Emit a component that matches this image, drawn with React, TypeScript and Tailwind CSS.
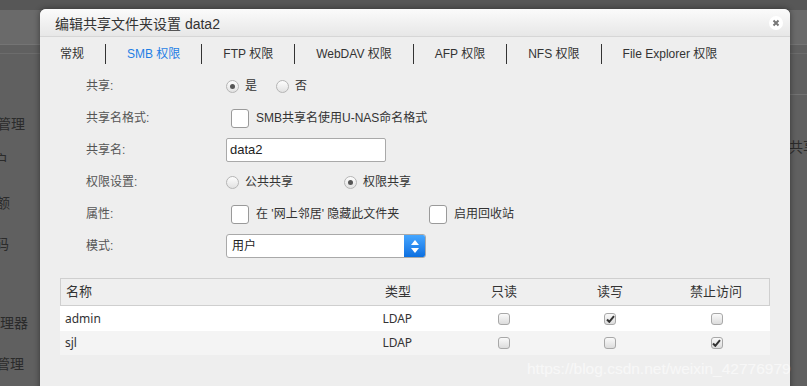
import React from 'react';

const font = "font-['Liberation_Sans','Noto_Sans_CJK_SC',sans-serif]";

function Radio({ checked }: { checked?: boolean }) {
  return (
    <span className="flex h-[13px] w-[13px] items-center justify-center rounded-full border border-[#b5b5b5] bg-gradient-to-b from-[#fdfdfd] to-[#e2e2e2]">
      {checked && <span className="h-[5px] w-[5px] rounded-full bg-[#555]" />}
    </span>
  );
}

function Box() {
  return <span className="ml-[5px] h-[19px] w-[18px] rounded-[3px] border border-[#9a9a9a] bg-white" />;
}

function SmallCheck({ checked }: { checked?: boolean }) {
  return (
    <span className="flex h-[12px] w-[12px] items-center justify-center rounded-[3px] border border-[#a8a8a8] bg-gradient-to-b from-[#fafafa] to-[#dcdcdc]">
      {checked && (
        <svg width="9" height="8" viewBox="0 0 9 8">
          <path d="M1 4.5 L3.3 6.8 L8 1.2" fill="none" stroke="#333" strokeWidth="2" />
        </svg>
      )}
    </span>
  );
}

function Row({ label, children }: { label: string; children: React.ReactNode }) {
  return (
    <div className="flex h-[32px] items-center">
      <div className="w-[140px] text-[12px] text-[#555]">{label}</div>
      <div className="flex items-center text-[12px] text-[#333]">{children}</div>
    </div>
  );
}

const tabs = ['常规', 'SMB 权限', 'FTP 权限', 'WebDAV 权限', 'AFP 权限', 'NFS 权限', 'File Explorer 权限'];

const users = [
  { name: 'admin', type: 'LDAP', perm: 1 },
  { name: 'sjl', type: 'LDAP', perm: 2 },
];

export default function App() {
  return (
    <div className={`relative h-[386px] w-[807px] overflow-hidden bg-[#606060] ${font}`}>
      {/* dimmed page behind the dialog */}
      <div className="h-[10px] bg-[#575757]" />
      <div className="h-[35px] bg-[#6a6a6a] border-b border-[#747474]" />
      <div className="h-[9px] border-b border-[#6c6c6c]" />
      <div className="flex">
        <div className="w-[40px] overflow-hidden text-[14px] leading-[20px] text-[#2b2b2b] whitespace-nowrap">
          <div className="mt-[60px] ml-[-31px]">共享管理</div>
          <div className="mt-[16px] ml-[-20px]">用户</div>
          <div className="mt-[23px] ml-[-18px]">配额</div>
          <div className="mt-[21px] ml-[-47px]">修改密码</div>
          <div className="mt-[59px] ml-[-42px]">文件管理器</div>
          <div className="mt-[21px] ml-[-32px]">系统管理</div>
        </div>
        <div className="flex-1">
          <div className="mt-[40px] border-t border-[#727272]" />
          <div className="mt-[42px] flex justify-end text-[14px] text-[#2b2b2b] whitespace-nowrap">
            <span className="mr-[-10px]">共享</span>
          </div>
        </div>
      </div>

      {/* dialog */}
      <div className="absolute left-[40px] top-[9px] h-[400px] w-[750px] rounded-t-[6px] bg-[#eeeeee] shadow-[0_0_6px_rgba(0,0,0,0.45)]">
        <div className="flex h-[28px] items-center justify-between rounded-t-[6px] border-b border-[#d6d6d6] bg-gradient-to-b from-[#fbfbfb] to-[#e7e7e7] pl-[15px] pr-[7px]">
          <span className="pt-[4px] text-[14px] text-[#333]">编辑共享文件夹设置 data2</span>
          <span className="mt-[1px] flex h-[14px] w-[14px] items-center justify-center rounded-full bg-white">
            <svg width="8" height="8" viewBox="0 0 8 8">
              <path d="M1.5 1.5 L6.5 6.5 M6.5 1.5 L1.5 6.5" stroke="#777" strokeWidth="2" />
            </svg>
          </span>
        </div>

        <div className="mt-[2px] flex h-[30px] items-center pl-[20px] text-[12px] text-[#333]">
          {tabs.map((t, i) => (
            <React.Fragment key={t}>
              {i > 0 && <span className="mx-[21px] h-[20px] w-px bg-[#333]" />}
              <span className={i === 1 ? 'text-[#1f7fe5]' : ''}>{t}</span>
            </React.Fragment>
          ))}
        </div>

        <div className="pt-[1px] pl-[46px]">
          <Row label="共享:">
            <span className="flex w-[50px] items-center gap-[6px]"><Radio checked />是</span>
            <span className="flex items-center gap-[6px]"><Radio />否</span>
          </Row>
          <Row label="共享名格式:">
            <Box />
            <span className="ml-[7px]">SMB共享名使用U-NAS命名格式</span>
          </Row>
          <Row label="共享名:">
            <div className="flex h-[24px] w-[160px] items-center rounded-[2px] border border-[#a9a9a9] bg-white px-[3px] text-[13px] text-[#222]">data2</div>
          </Row>
          <Row label="权限设置:">
            <span className="flex w-[118px] items-center gap-[6px]"><Radio />公共共享</span>
            <span className="flex items-center gap-[6px]"><Radio checked />权限共享</span>
          </Row>
          <Row label="属性:">
            <Box />
            <span className="ml-[7px] w-[168px]">在 '网上邻居' 隐藏此文件夹</span>
            <Box />
            <span className="ml-[7px]">启用回收站</span>
          </Row>
          <Row label="模式:">
            <div className="flex h-[24px] w-[200px] overflow-hidden rounded-[3px] border border-[#a9a9a9] bg-white">
              <span className="flex flex-1 items-center px-[5px] text-[12px] text-[#222]">用户</span>
              <span className="flex w-[21px] flex-col items-center justify-center gap-[3px] bg-gradient-to-b from-[#45a6ff] to-[#0b6fe0]">
                <svg width="8" height="5" viewBox="0 0 8 5"><path d="M0 5 L4 0 L8 5Z" fill="#fff" /></svg>
                <svg width="8" height="5" viewBox="0 0 8 5"><path d="M0 0 L4 5 L8 0Z" fill="#fff" /></svg>
              </span>
            </div>
          </Row>
        </div>

        <div className="mx-[20px] mt-[16px] font-['Noto_Sans','Noto_Sans_CJK_SC',sans-serif] text-[12px] text-[#333]">
          <div className="grid h-[28px] grid-cols-[284px_repeat(4,1fr)] items-center border border-[#cfcfcf] bg-[#efefef] text-[13px]">
            <span className="pl-[5px]">名称</span>
            <span className="text-center">类型</span>
            <span className="text-center">只读</span>
            <span className="text-center">读写</span>
            <span className="text-center">禁止访问</span>
          </div>
          {users.map((u, i) => (
            <div
              key={u.name}
              className={`grid grid-cols-[284px_repeat(4,1fr)] items-center ${i === 0 ? 'h-[25px] bg-white' : 'h-[24px] bg-[#f4f4f4]'}`}
            >
              <span className="pl-[5px]">{u.name}</span>
              <span className="text-center">{u.type}</span>
              {[0, 1, 2].map((p) => (
                <span key={p} className="flex justify-center">
                  <SmallCheck checked={u.perm === p} />
                </span>
              ))}
            </div>
          ))}
        </div>
      </div>

      <div className="absolute left-[527px] top-[357px] text-[15.5px] text-white/55 whitespace-nowrap">
        https://blog.csdn.net/weixin_42776979
      </div>
    </div>
  );
}
